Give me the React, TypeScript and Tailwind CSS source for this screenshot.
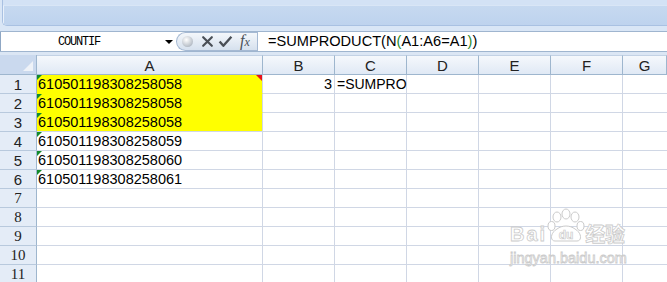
import React from 'react'

const cols = [
  { key: 'A', w: 'w-[226px]' },
  { key: 'B', w: 'w-[72px]' },
  { key: 'C', w: 'w-[72px]' },
  { key: 'D', w: 'w-[72px]' },
  { key: 'E', w: 'w-[72px]' },
  { key: 'F', w: 'w-[72px]' },
  { key: 'G', w: 'flex-1' },
]

const rows = [
  { n: 1, a: '610501198308258058', yellow: true, b: '3', c: '=SUMPRO', comment: true },
  { n: 2, a: '610501198308258058', yellow: true },
  { n: 3, a: '610501198308258058', yellow: true, last: true },
  { n: 4, a: '610501198308258059' },
  { n: 5, a: '610501198308258060' },
  { n: 6, a: '610501198308258061' },
  { n: 7 },
  { n: 8 },
  { n: 9 },
  { n: 10 },
  { n: 11 },
]

const sans = "font-['Liberation_Sans',Arial,sans-serif]"

const GreenMark = () => (
  <span className="absolute left-0 top-0 h-0 w-0 border-t-[5px] border-r-[5px] border-t-[#128a2c] border-r-transparent" />
)

// baidu jingyan watermark, sits over the grid
const Watermark = () => (
  <div className="pointer-events-none absolute left-[510px] top-[208px] flex flex-col text-white [-webkit-text-stroke:0.8px_#cbcbcb]">
    <div className="flex h-[35px] items-end">
      <span className="mb-[1px] font-['Liberation_Sans',Arial,sans-serif] text-[20px] font-bold leading-[16px] tracking-[2px]">Bai</span>
      <svg width="38" height="35" viewBox="0 0 38 35">
        <g fill="#fff" stroke="#cbcbcb" strokeWidth="1">
          <ellipse cx="10" cy="9" rx="4" ry="5" />
          <ellipse cx="19" cy="6" rx="4" ry="5" />
          <ellipse cx="28" cy="9" rx="4" ry="5" />
          <ellipse cx="4.5" cy="18" rx="3.5" ry="4.5" />
          <ellipse cx="33.5" cy="18" rx="3.5" ry="4.5" />
          <path d="M8 33 C3 33 3 25 10 21 C15 17 23 17 28 21 C35 25 35 33 30 33 Z" />
        </g>
        <text x="19" y="31" textAnchor="middle" fontSize="12" fontWeight="bold" fontFamily="Liberation Sans, Arial, sans-serif" fill="#fff" stroke="#cbcbcb" strokeWidth="0.7">du</text>
      </svg>
      <span className="mb-[1px] font-['Noto_Sans_CJK_SC',sans-serif] text-[20px] font-bold leading-[17px]">经验</span>
    </div>
    <span className="mt-[8px] font-['Liberation_Sans',Arial,sans-serif] text-[14.5px] leading-[15px]">jingyan.baidu.com</span>
  </div>
)

export default function App() {
  return (
    <div className={`relative h-[282px] w-[667px] overflow-hidden bg-[#d6e4f5] ${sans}`}>
      {/* ribbon bottom */}
      <div className="h-[31px] bg-[#d9e6f6]">
        <div className="ml-[2px] flex h-[26px] flex-col overflow-hidden rounded-bl-[5px] border-b border-l border-[#a9c1e2]">
          <div className="h-[5px] bg-[#d3e2f5]" />
          <div className="flex-1 border-l border-t border-l-[#e9f1fb] border-t-[#d9e6f6] bg-gradient-to-b from-[#c6d9f0] to-[#bed3ee]" />
        </div>
      </div>

      {/* formula bar */}
      <div className="flex h-[21px] border-y border-[#9fb5cf] bg-white">
        <div className="relative flex w-[176px] items-center border-l border-[#8fa7c4]">
          <span className="ml-[57px] font-['Liberation_Mono',monospace] text-[12px] tracking-[-1.2px] text-black">COUNTIF</span>
          <span className="absolute left-[164px] top-[8px] h-0 w-0 border-x-[4px] border-t-[4px] border-x-transparent border-t-black" />
        </div>
        <div className="flex h-[19px] w-[81px] items-center rounded-l-full border border-r-0 border-[#a5b9d3] bg-gradient-to-b from-[#f4f7fb] to-[#d6e1ee]">
          <span className="ml-[5px] h-[11px] w-[11px] rounded-full bg-[radial-gradient(circle_at_40%_35%,#ffffff,#b8bfc8_70%,#9aa3ae)]" />
          <svg width="13" height="13" viewBox="0 0 12 12" className="ml-[8px]">
            <path d="M2 2 L10 10 M10 2 L2 10" stroke="#4a4f56" strokeWidth="2" strokeLinecap="round" />
          </svg>
          <svg width="15" height="13" viewBox="0 0 14 12" className="ml-[4px]">
            <path d="M1.5 6 L5 10 L12.5 1.5" stroke="#4a4f56" strokeWidth="2.2" fill="none" strokeLinejoin="round" />
          </svg>
          <span className="ml-[7px] font-['Liberation_Serif',serif] text-[16px] italic leading-[14px] text-[#4a4f56]">
            f<span className="text-[12px]">x</span>
          </span>
        </div>
        <div className="flex flex-1 items-center border-l border-[#a5b9d3] pl-[10px] text-[14.6px] text-black">
          =SUMPRODUCT(N<span className="text-[#2a8a2a]">(</span>A1:A6=A1<span className="text-[#2a8a2a]">)</span>)
        </div>
      </div>

      <div className="h-[3px] bg-[#dbe6f4]" />

      {/* sheet */}
      <div className="flex flex-col bg-white">
        <div className="flex h-[20px]">
          <div className="relative w-[37px] border-b border-r border-[#9eb6ce] bg-[#cad9ee]">
            <span className="absolute bottom-[3px] right-[3px] h-0 w-0 border-b-[10px] border-l-[10px] border-b-[#eef2f8] border-l-transparent" />
          </div>
          {cols.map((c) => (
            <div
              key={c.key}
              className={`${c.w} flex items-center justify-center border-b border-r border-t border-[#9eb6ce] border-t-[#c3d2e5] bg-gradient-to-b from-[#f5f8fc] to-[#e0e9f5] text-[15px] leading-none text-[#222]`}
            >
              {c.key}
            </div>
          ))}
        </div>
        {rows.map((r) => (
          <div key={r.n} className="flex h-[19px]">
            <div
              className={`flex w-[37px] items-center justify-center border-b border-r border-[#9eb6ce] border-b-[#b8c9dd] bg-[#e4ecf7] text-[15px] leading-none text-[#222] ${
                r.n > 6 ? "font-['Liberation_Serif',serif]" : ''
              }`}
            >
              {r.n}
            </div>
            <div
              className={`relative flex w-[226px] items-center border-b border-r border-[#d0d7e5] pl-[1px] text-[14.5px] leading-none text-black ${
                r.yellow ? 'bg-[#ffff00]' : ''
              } ${r.yellow && !r.last ? 'border-b-[#ffff00]' : ''}`}
            >
              {r.a && <GreenMark />}
              {r.comment && (
                <span className="absolute right-0 top-0 h-0 w-0 border-l-[6px] border-t-[6px] border-l-transparent border-t-[#e8121b]" />
              )}
              {r.a}
            </div>
            <div className="flex w-[72px] items-center justify-end border-b border-r border-[#d0d7e5] pr-[2px] text-[14.5px] leading-none text-black">
              {r.b}
            </div>
            <div className="flex w-[72px] items-center whitespace-nowrap border-b border-r border-[#d0d7e5] pl-[2px] text-[14px] leading-none text-black">
              {r.c}
            </div>
            <div className="w-[72px] border-b border-r border-[#d0d7e5]" />
            <div className="w-[72px] border-b border-r border-[#d0d7e5]" />
            <div className="w-[72px] border-b border-r border-[#d0d7e5]" />
            <div className="flex-1 border-b border-[#d0d7e5]" />
          </div>
        ))}
      </div>

      <Watermark />
    </div>
  )
}
